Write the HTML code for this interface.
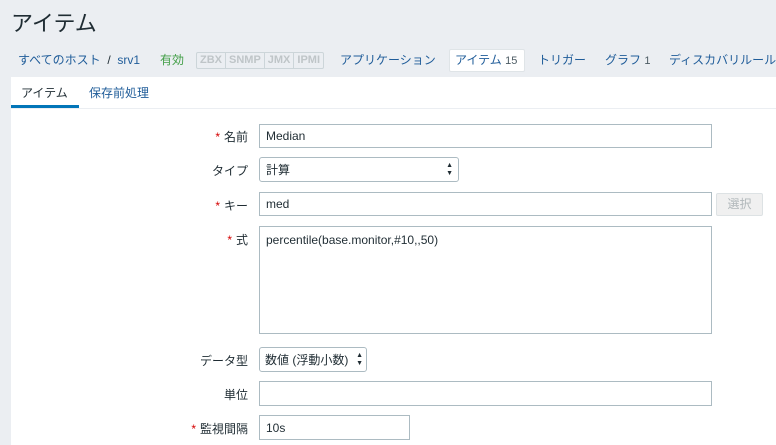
<!DOCTYPE html>
<html><head><meta charset="utf-8"><style>
*{box-sizing:border-box;margin:0;padding:0}
body{width:776px;height:445px;overflow:hidden;background:#ebeef2;font-family:"Liberation Sans","Noto Sans CJK JP",sans-serif;font-size:12px;color:#1f2c33;position:relative}
.a{position:absolute;white-space:nowrap}
h1{position:absolute;left:11px;top:6px;font-size:22px;font-weight:normal;color:#1f2c33}
.nav{top:52px;font-size:12px;color:#1f5c99;line-height:16px}
.tags{position:absolute;left:196px;top:52px;height:17px;border:1px solid #ccd5d9;border-radius:2px;display:flex;font-size:11px;font-weight:bold;color:#bfc5c8}
.tags span{padding:0 3px;line-height:15px;border-right:1px solid #ccd5d9}
.tags span:last-child{border-right:0}
.cur{position:absolute;left:449px;top:49px;width:76px;height:23px;background:#fff;border:1px solid #dfe4e7;border-radius:2px}
.white{position:absolute;left:11px;top:77px;right:0;bottom:0;background:#fff}
.tabline{position:absolute;left:11px;top:108px;right:0;height:1px;background:#ebeef2}
.lab{font-size:12px;text-align:right;width:140px;left:108px}
.lab b{color:#d40000;font-weight:normal;margin-right:4px}
.in{position:absolute;border:1px solid #acbbc2;background:#fff;font-size:12px;padding:0 6px;display:flex;align-items:center;line-height:14px}
.sel{border-radius:3px}
.arr{position:absolute;right:5px;top:50%;transform:translateY(-50%);font-size:7px;line-height:8px}
</style></head><body>
<h1>アイテム</h1>
<div class="cur"></div>
<div class="a nav" style="left:18px">すべてのホスト&nbsp;&nbsp;<span style="color:#1f2c33">/</span>&nbsp;&nbsp;srv1</div>
<div class="a nav" style="left:160px;color:#429e47">有効</div>
<div class="tags"><span>ZBX</span><span>SNMP</span><span>JMX</span><span>IPMI</span></div>
<div class="a nav" style="left:340px">アプリケーション</div>
<div class="a nav" style="left:455px">アイテム <span style="font-size:11px;color:#4c5b63">15</span></div>
<div class="a nav" style="left:538px">トリガー</div>
<div class="a nav" style="left:605px">グラフ <span style="font-size:11px;color:#4c5b63">1</span></div>
<div class="a nav" style="left:669px">ディスカバリルール</div>
<div class="white"></div>
<div class="tabline"></div>
<div class="a" style="left:21px;top:84px;font-size:12px">アイテム</div>
<div class="a" style="left:11px;top:105px;width:68px;height:3px;background:#0275b8"></div>
<div class="a" style="left:89px;top:84px;color:#1f5c99">保存前処理</div>

<div class="a lab" style="top:128px"><b>*</b>名前</div>
<div class="in" style="left:259px;top:124px;width:453px;height:24px">Median</div>
<div class="a lab" style="top:162px">タイプ</div>
<div class="in sel" style="left:259px;top:157px;width:200px;height:25px">計算<span class="arr">▲<br>▼</span></div>
<div class="a lab" style="top:197px"><b>*</b>キー</div>
<div class="in" style="left:259px;top:192px;width:453px;height:24px">med</div>
<div class="a" style="left:716px;top:193px;width:47px;height:23px;background:#f0f0f0;border:1px solid #dde2e4;border-radius:2px;color:#b0b7ba;text-align:center;line-height:21px">選択</div>
<div class="a lab" style="top:231px"><b>*</b>式</div>
<div class="in" style="left:259px;top:226px;width:453px;height:108px;align-items:flex-start;padding-top:6px">percentile(base.monitor,#10,,50)</div>
<div class="a lab" style="top:352px">データ型</div>
<div class="in sel" style="left:259px;top:347px;width:108px;height:25px;padding-left:5px">数値 (浮動小数)<span class="arr" style="right:3px">▲<br>▼</span></div>
<div class="a lab" style="top:386px">単位</div>
<div class="in" style="left:259px;top:381px;width:453px;height:25px"></div>
<div class="a lab" style="top:420px"><b>*</b>監視間隔</div>
<div class="in" style="left:259px;top:415px;width:151px;height:25px">10s</div>
</body></html>
